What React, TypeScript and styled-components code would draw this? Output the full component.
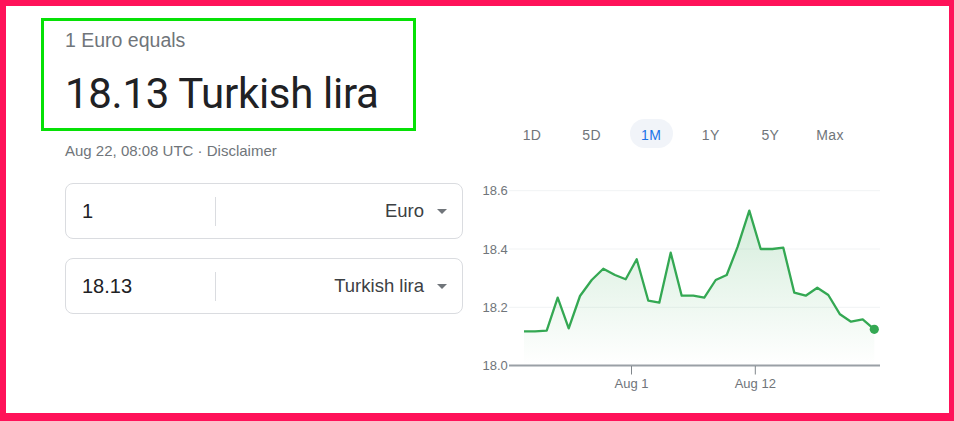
import * as React from "react";
import { useState } from "react";
import styled, { createGlobalStyle } from "styled-components";

const GlobalStyle = createGlobalStyle`
  html, body {
    margin: 0;
    padding: 0;
    background: #ffffff;
  }
  body {
    font-family: "Liberation Sans", Arial, sans-serif;
  }
`;

const Frame = styled.div`
  width: 954px;
  height: 421px;
  box-sizing: border-box;
  border-style: solid;
  border-color: #ff1259;
  border-width: 6px 5px 8px 6px;
  background: #fff;
  display: flex;
  align-items: flex-start;
  overflow: hidden;
`;

const LeftColumn = styled.div`
  width: 398px;
  margin-left: 59px;
  margin-top: 12px;
  display: flex;
  flex-direction: column;
`;

const Headline = styled.div`
  box-sizing: border-box;
  width: 375px;
  margin-left: -24px;
  border: 3px solid #06e106;
  padding: 7px 19px 8px 21px;
`;

const Lead = styled.div`
  font-size: 19.5px;
  line-height: 24px;
  color: #70757a;
`;

const Result = styled.div`
  margin-top: 16px;
  font-family: Roboto, "Liberation Sans", sans-serif;
  font-size: 42px;
  line-height: 52px;
  letter-spacing: -0.3px;
  color: #202124;
`;

const Meta = styled.div`
  margin-top: 10px;
  font-size: 15px;
  line-height: 20px;
  color: #70757a;
`;

const Converter = styled.div`
  margin-top: 22px;
  display: flex;
  flex-direction: column;
  gap: 19px;
`;

const Field = styled.div`
  box-sizing: border-box;
  height: 56px;
  border: 1px solid #dadce0;
  border-radius: 8px;
  display: flex;
  align-items: center;
`;

const Amount = styled.div`
  box-sizing: border-box;
  width: 149px;
  padding-left: 16px;
  font-size: 20px;
  color: #202124;
`;

const Divider = styled.div`
  width: 1px;
  height: 29px;
  background: #dadce0;
`;

const Unit = styled.div`
  flex: 1;
  display: flex;
  align-items: center;
  justify-content: flex-end;
  gap: 13px;
  padding-right: 15px;
  font-size: 18.5px;
  color: #3c4043;
`;

const Caret = styled.span`
  width: 0;
  height: 0;
  border-left: 5px solid transparent;
  border-right: 5px solid transparent;
  border-top: 5px solid #70757a;
  margin-top: 1px;
`;

const RightColumn = styled.div`
  width: 404px;
  margin-left: 17px;
  margin-top: 113px;
  display: flex;
  flex-direction: column;
`;

const Tabs = styled.div`
  display: flex;
  gap: 16.6px;
  padding-left: 30.5px;
`;

const Tab = styled.div<{ $active?: boolean }>`
  width: 43px;
  height: 29px;
  border-radius: 15px;
  display: flex;
  align-items: center;
  justify-content: center;
  font-size: 14px;
  letter-spacing: 0.4px;
  padding-top: 2px;
  box-sizing: border-box;
  color: ${(p) => (p.$active ? "#1a73e8" : "#70757a")};
  background: ${(p) => (p.$active ? "#f1f4f9" : "transparent")};
`;

const Chart = styled.svg`
  display: block;
  font-family: "Liberation Sans", Arial, sans-serif;
`;

const points: [number, number][] = [
  [524, 331.3], [535, 331.3], [546.7, 330.7], [557.7, 297.7], [568.7, 328.3],
  [580, 296], [591.7, 280], [603.3, 268.7], [615, 275], [625.7, 279.3],
  [636.7, 259.3], [648.3, 300.7], [659.3, 302.7], [670.7, 252.7], [681.7, 295.7],
  [693.3, 295.7], [704.3, 297.7], [715.7, 280], [726.7, 275], [737.7, 246.7],
  [749.3, 210.7], [760.7, 249], [772.3, 249], [783.3, 247.7], [794.3, 292.7],
  [805.7, 295.7], [817.3, 287.7], [828.3, 295], [840, 314.3], [851, 321.7],
  [862.7, 319.3], [874.3, 329.3],
];

const yLabels = [
  { v: "18.6", y: 190.7 },
  { v: "18.4", y: 249 },
  { v: "18.2", y: 307.3 },
];

const xLabels = [
  { v: "Aug 1", x: 631.5 },
  { v: "Aug 12", x: 755.3 },
];

const ranges = ["1D", "5D", "1M", "1Y", "5Y", "Max"];

function RateChart() {
  const line = points.map(([x, y], i) => `${i ? "L" : "M"}${x} ${y}`).join(" ");
  const last = points[points.length - 1];
  const area = `${line} L${last[0]} 365 L${points[0][0]} 365 Z`;

  return (
    <Chart width={404} height={250} viewBox="480 148 404 250">
      <defs>
        <linearGradient id="fade" x1="0" y1="205" x2="0" y2="365" gradientUnits="userSpaceOnUse">
          <stop offset="0" stopColor="#34a853" stopOpacity="0.22" />
          <stop offset="1" stopColor="#34a853" stopOpacity="0" />
        </linearGradient>
      </defs>
      {yLabels.map((l) => (
        <g key={l.v}>
          <line x1={509} x2={880} y1={l.y} y2={l.y} stroke="#f1f3f4" strokeWidth={1} />
          <text x={482.5} y={l.y + 4.5} fontSize={13} fill="#70757a">
            {l.v}
          </text>
        </g>
      ))}
      <path d={area} fill="url(#fade)" />
      <path d={line} fill="none" stroke="#34a853" strokeWidth={2.3} strokeLinejoin="round" />
      <circle cx={last[0]} cy={last[1]} r={4.6} fill="#34a853" />
      <line x1={509} x2={880} y1={365.5} y2={365.5} stroke="#9aa0a6" strokeWidth={2} />
      <text x={482.5} y={370} fontSize={13} fill="#70757a">
        18.0
      </text>
      {xLabels.map((l) => (
        <g key={l.v}>
          <line x1={l.x} x2={l.x} y1={366} y2={374.5} stroke="#80868b" strokeWidth={1} />
          <text x={l.x} y={387.5} fontSize={13} fill="#70757a" textAnchor="middle">
            {l.v}
          </text>
        </g>
      ))}
    </Chart>
  );
}

export default function App() {
  const [range, setRange] = useState("1M");

  return (
    <>
      <GlobalStyle />
      <Frame>
        <LeftColumn>
          <Headline>
            <Lead>1 Euro equals</Lead>
            <Result>18.13 Turkish lira</Result>
          </Headline>
          <Meta>Aug 22, 08:08 UTC · Disclaimer</Meta>
          <Converter>
            <Field>
              <Amount>1</Amount>
              <Divider />
              <Unit>
                Euro
                <Caret />
              </Unit>
            </Field>
            <Field>
              <Amount>18.13</Amount>
              <Divider />
              <Unit>
                Turkish lira
                <Caret />
              </Unit>
            </Field>
          </Converter>
        </LeftColumn>
        <RightColumn>
          <Tabs>
            {ranges.map((r) => (
              <Tab key={r} $active={r === range} onClick={() => setRange(r)}>
                {r}
              </Tab>
            ))}
          </Tabs>
          <RateChart />
        </RightColumn>
      </Frame>
    </>
  );
}
